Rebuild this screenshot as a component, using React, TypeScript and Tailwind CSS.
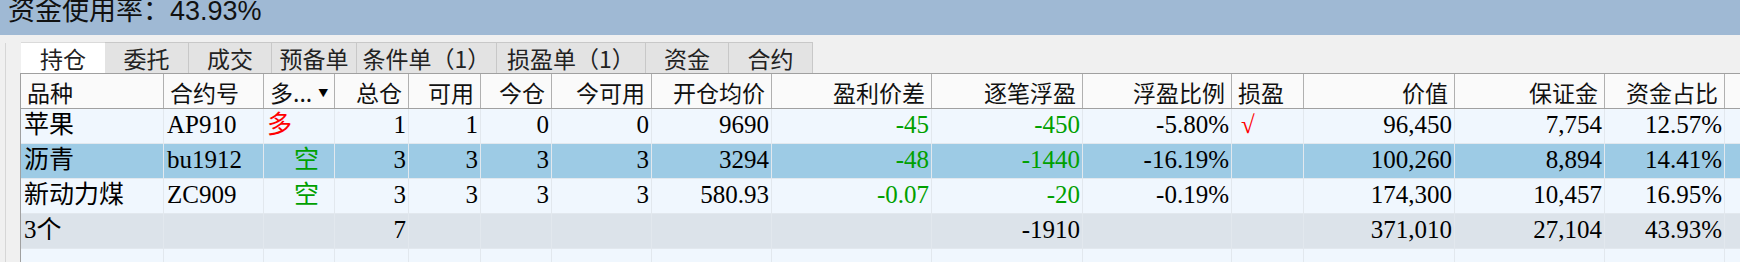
import React from "react";

// 持仓列表：列宽按截图量出来的像素写死
interface Col {
  title: string;
  w: string;
  align: "left" | "right";
}

const cols: Col[] = [
  { title: "品种", w: "w-[143px]", align: "left" },
  { title: "合约号", w: "w-[100px]", align: "left" },
  { title: "多...", w: "w-[71px]", align: "left" },
  { title: "总仓", w: "w-[74px]", align: "right" },
  { title: "可用", w: "w-[72px]", align: "right" },
  { title: "今仓", w: "w-[71px]", align: "right" },
  { title: "今可用", w: "w-[100px]", align: "right" },
  { title: "开仓均价", w: "w-[120px]", align: "right" },
  { title: "盈利价差", w: "w-[160px]", align: "right" },
  { title: "逐笔浮盈", w: "w-[151px]", align: "right" },
  { title: "浮盈比例", w: "w-[149px]", align: "right" },
  { title: "损盈", w: "w-[72px]", align: "left" },
  { title: "价值", w: "w-[151px]", align: "right" },
  { title: "保证金", w: "w-[150px]", align: "right" },
  { title: "资金占比", w: "w-[120px]", align: "right" },
];

type Cell = { v: string; color?: string; pad?: string };

interface Row {
  kind: "normal" | "selected" | "total";
  cells: Cell[];
}

const G = "text-[#00a000]";
const R = "text-[#ff0000]";

const rows: Row[] = [
  {
    kind: "normal",
    cells: [
      { v: "苹果" }, { v: "AP910" }, { v: "多", color: R }, { v: "1" }, { v: "1" }, { v: "0" }, { v: "0" },
      { v: "9690" }, { v: "-45", color: G }, { v: "-450", color: G }, { v: "-5.80%" }, { v: "√", color: R, pad: "pl-[9px]" },
      { v: "96,450" }, { v: "7,754" }, { v: "12.57%" },
    ],
  },
  {
    kind: "selected",
    cells: [
      { v: "沥青" }, { v: "bu1912" }, { v: "空", color: G, pad: "pl-[30px]" }, { v: "3" }, { v: "3" }, { v: "3" }, { v: "3" },
      { v: "3294" }, { v: "-48", color: G }, { v: "-1440", color: G }, { v: "-16.19%" }, { v: "" },
      { v: "100,260" }, { v: "8,894" }, { v: "14.41%" },
    ],
  },
  {
    kind: "normal",
    cells: [
      { v: "新动力煤" }, { v: "ZC909" }, { v: "空", color: G, pad: "pl-[30px]" }, { v: "3" }, { v: "3" }, { v: "3" }, { v: "3" },
      { v: "580.93" }, { v: "-0.07", color: G }, { v: "-20", color: G }, { v: "-0.19%" }, { v: "" },
      { v: "174,300" }, { v: "10,457" }, { v: "16.95%" },
    ],
  },
  {
    kind: "total",
    cells: [
      { v: "3个" }, { v: "" }, { v: "" }, { v: "7" }, { v: "" }, { v: "" }, { v: "" },
      { v: "" }, { v: "" }, { v: "-1910" }, { v: "" }, { v: "" },
      { v: "371,010" }, { v: "27,104" }, { v: "43.93%" },
    ],
  },
];

const tabs = [
  { name: "持仓", w: "w-[84px]" },
  { name: "委托", w: "w-[84px]" },
  { name: "成交", w: "w-[83px]" },
  { name: "预备单", w: "w-[85px]" },
  { name: "条件单（1）", w: "w-[140px]" },
  { name: "损盈单（1）", w: "w-[149px]" },
  { name: "资金", w: "w-[83px]" },
  { name: "合约", w: "w-[84px]" },
];

const rowBg = {
  normal: "bg-[#f0f7fe]",
  selected: "bg-[#9dcbe5]",
  total: "bg-[#dce3ea]",
};

export default function App() {
  return (
    <div className="w-[1740px] h-[262px] overflow-hidden bg-[#f0f0f0] text-black">
      {/* 顶部资金使用率 */}
      <div className="h-[35px] bg-[#9fb9d4] overflow-hidden pl-[8px]">
        <div className="-mt-[2px] leading-[27px] text-[27px] text-[#111] font-['Liberation_Sans','Noto_Sans_CJK_SC',sans-serif]">
          资金使用率：43.93%
        </div>
      </div>

      <div className="flex h-[227px]">
        <div className="w-[5px]" />
        <div className="w-px mt-[8px] bg-[#d6d6d6]" />
        <div className="w-[14px]" />

        <div className="flex-1 flex flex-col pt-[7px]">
          {/* 页签 */}
          <div className="flex h-[31px] pl-px font-['Noto_Sans_CJK_SC',sans-serif] text-[23px] text-[#222]">
            {tabs.map((t, i) => (
              <div
                key={t.name}
                className={
                  i === 0
                    ? `${t.w} flex items-center justify-center bg-white border-t border-[#dadada]`
                    : `${t.w} flex items-center justify-center bg-[#e3e3e3] border-t border-r border-[#c8c8c8]`
                }
              >
                {t.name}
              </div>
            ))}
          </div>

          {/* 表格 */}
          <div className="flex-1 border-l border-t border-[#a0a0a0] bg-[#f0f7fe] overflow-hidden">
            <div className="flex h-[35px] bg-[#fafafa] border-b border-[#a0a0a0] font-['Noto_Sans_CJK_SC',sans-serif] text-[23px] text-[#111]">
              {cols.map((c, i) => (
                <div
                  key={c.title}
                  className={`${c.w} shrink-0 flex items-center pt-[2px] border-r border-[#b0b0b0] ${
                    c.align === "right" ? "justify-end pr-[6px]" : "justify-start pl-[6px]"
                  }`}
                >
                  {c.title}
                  {i === 2 && <span className="ml-[6px] text-[10px] text-black">▼</span>}
                </div>
              ))}
              <div className="flex-1" />
            </div>

            {rows.map((r, ri) => (
              <div
                key={ri}
                className={`flex h-[35px] ${rowBg[r.kind]} font-['Liberation_Serif','Noto_Sans_CJK_SC',serif] text-[25px]`}
              >
                {r.cells.map((c, i) => (
                  <div
                    key={i}
                    className={`${cols[i].w} shrink-0 leading-[31px] whitespace-nowrap border-r border-b border-[#e2e8ee] ${
                      cols[i].align === "right" ? "text-right pr-[2px]" : `text-left ${c.pad ?? "pl-[3px]"}`
                    } ${c.color ?? ""}`}
                  >
                    {c.v}
                  </div>
                ))}
                <div className="flex-1 border-b border-[#e2e8ee]" />
              </div>
            ))}

            {/* 空行 */}
            <div className="flex h-[35px] bg-[#f0f7fe]">
              {cols.map((c) => (
                <div key={c.title} className={`${c.w} shrink-0 border-r border-[#e2e8ee]`} />
              ))}
            </div>
          </div>
        </div>
      </div>
    </div>
  );
}
